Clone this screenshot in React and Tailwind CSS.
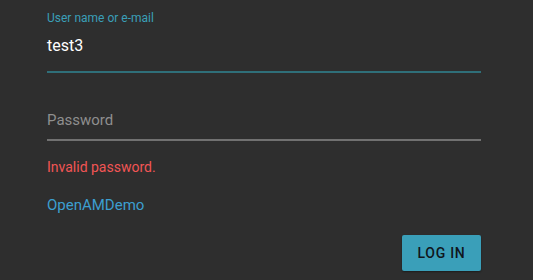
import React from 'react';

export default function App() {
  return (
    <div className="w-[533px] h-[280px] bg-[#2e2e2e] font-['Roboto',sans-serif] overflow-hidden">
      <div className="ml-[47px] w-[434px] flex flex-col">
        <div className="pt-[10px]">
          <div className="text-[12px] leading-[16px] text-[#3a9fb8]">User name or e-mail</div>
          <div className="mt-[10px] text-[16px] leading-[20px] text-white">test3</div>
          <div className="mt-[15px] h-[2px] bg-[#2f6f79]" />
        </div>
        <div className="mt-[37px]">
          <div className="text-[15px] leading-[20px] text-[#8f8f8f]">Password</div>
          <div className="mt-[9px] h-[2px] bg-[#717171]" />
        </div>
        <div className="mt-[17px] text-[14px] leading-[18px] text-[#f25555]">Invalid password.</div>
        <div className="mt-[19px] text-[15px] leading-[20px] text-[#3c9fd0]">OpenAMDemo</div>
        <div className="mt-[20px] flex justify-end">
          <button className="w-[79px] h-[36px] rounded-[2px] bg-[#3a9fb9] text-[14px] font-medium tracking-[0.05em] text-[#10161c] shadow-[0_1px_2px_rgba(0,0,0,0.4)]">
            LOG IN
          </button>
        </div>
      </div>
    </div>
  );
}
